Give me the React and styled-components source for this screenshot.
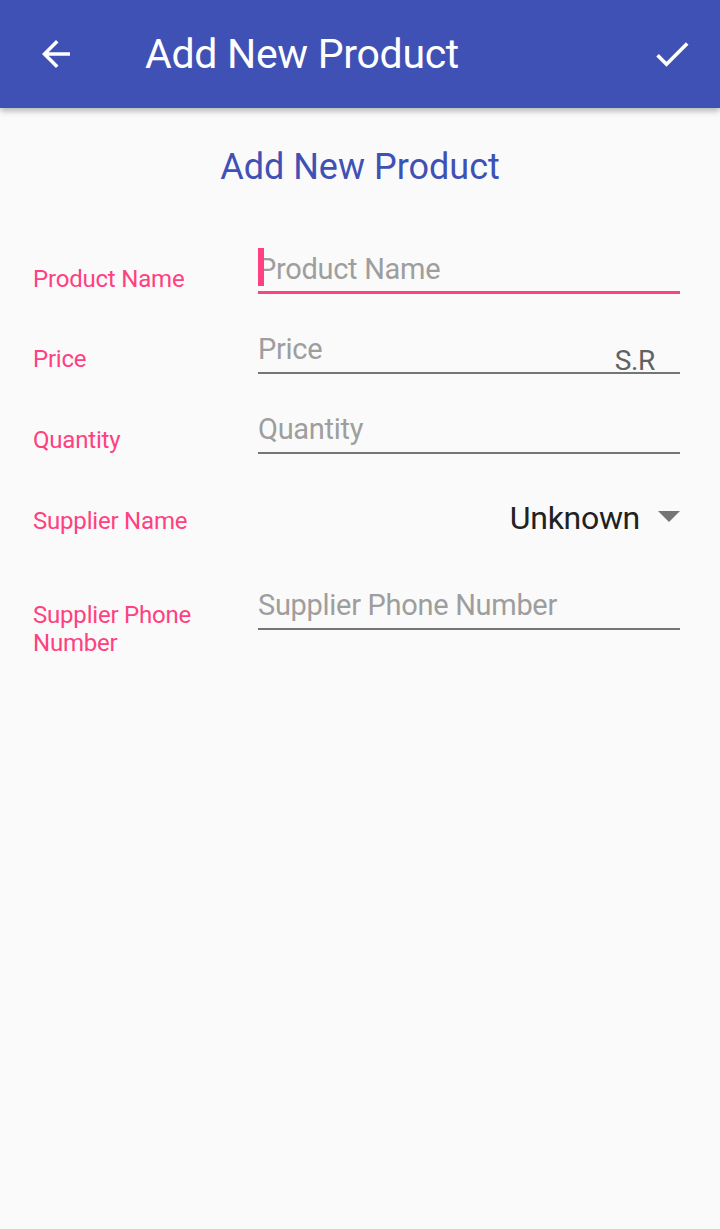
import styled, { createGlobalStyle } from "styled-components";

const GlobalStyle = createGlobalStyle`
	html, body {
		margin: 0;
		padding: 0;
		background: #fafafa;
		font-family: Roboto, "Liberation Sans", sans-serif;
	}
`;

const Screen = styled.div`
	width: 720px;
	min-height: 1229px;
	background: #fafafa;
`;

const AppBar = styled.header`
	height: 108px;
	background: #3f51b5;
	display: flex;
	align-items: center;
	padding: 0 26px 0 34px;
	box-sizing: border-box;
	box-shadow: 0 3px 6px rgba(0, 0, 0, 0.28);
	position: relative;
`;

const BarTitle = styled.h1`
	flex: 1;
	margin: 0 0 0 67px;
	color: #fff;
	font-size: 41px;
	font-weight: 400;
	letter-spacing: -0.3px;
`;

const IconButton = styled.div`
	display: flex;
	align-items: center;
	justify-content: center;
	width: 44px;
	height: 44px;
`;

const Heading = styled.h2`
	margin: 38px 0 0;
	text-align: center;
	color: #3f51b5;
	font-size: 36px;
	font-weight: 400;
`;

const Form = styled.div`
	display: flex;
	flex-direction: column;
	padding: 58px 40px 0 33px;
`;

const Row = styled.div`
	display: grid;
	grid-template-columns: 225px 1fr;
	align-items: start;
	height: ${(p) => p.$h}px;
`;

const Label = styled.div`
	color: #ff4081;
	font-size: 24px;
	line-height: 28px;
	letter-spacing: -0.2px;
	padding-top: ${(p) => p.$top}px;
`;

const Field = styled.div`
	position: relative;
	height: 48px;
	border-bottom: ${(p) => (p.$active ? "3px solid #ff4081" : "2px solid #757575")};
	box-sizing: border-box;
	display: flex;
	align-items: center;
	padding-bottom: ${(p) => (p.$active ? 0 : 1)}px;
`;

const Placeholder = styled.span`
	color: #9e9e9e;
	font-size: 29px;
	letter-spacing: -0.3px;
`;

const Cursor = styled.span`
	position: absolute;
	left: 0;
	top: 2px;
	width: 6px;
	height: 38px;
	background: #ff4081;
`;

const Suffix = styled.span`
	position: absolute;
	right: 25px;
	bottom: -5px;
	color: #616161;
	font-size: 28px;
	letter-spacing: -0.3px;
`;

const Spinner = styled.div`
	display: flex;
	justify-content: flex-end;
	align-items: center;
	gap: 18px;
	padding-top: 13px;
	color: #212121;
	font-size: 32px;
	letter-spacing: -0.3px;
`;

const Arrow = styled.span`
	width: 0;
	height: 0;
	border-left: 11px solid transparent;
	border-right: 11px solid transparent;
	border-top: 11px solid #757575;
	margin-bottom: 4px;
`;

const App = () => {
	return (
		<Screen>
			<GlobalStyle />
			<AppBar>
				<IconButton>
					<svg width="42" height="42" viewBox="0 0 24 24">
						<path d="M20 11H7.83l5.59-5.59L12 4l-8 8 8 8 1.41-1.41L7.83 13H20v-2z" fill="#fff" />
					</svg>
				</IconButton>
				<BarTitle>Add New Product</BarTitle>
				<IconButton>
					<svg width="44" height="44" viewBox="0 0 24 24">
						<path d="M9 16.17L4.83 12l-1.42 1.41L9 19 21 7l-1.41-1.41z" fill="#fff" />
					</svg>
				</IconButton>
			</AppBar>
			<Heading>Add New Product</Heading>
			<Form>
				<Row $h={80}>
					<Label $top={19}>Product Name</Label>
					<Field $active>
						<Cursor />
						<Placeholder>Product Name</Placeholder>
					</Field>
				</Row>
				<Row $h={80}>
					<Label $top={19}>Price</Label>
					<Field>
						<Placeholder>Price</Placeholder>
						<Suffix>S.R</Suffix>
					</Field>
				</Row>
				<Row $h={80}>
					<Label $top={20}>Quantity</Label>
					<Field>
						<Placeholder>Quantity</Placeholder>
					</Field>
				</Row>
				<Row $h={96}>
					<Label $top={21}>Supplier Name</Label>
					<Spinner>
						Unknown
						<Arrow />
					</Spinner>
				</Row>
				<Row $h={100}>
					<Label $top={19}>Supplier Phone Number</Label>
					<Field>
						<Placeholder>Supplier Phone Number</Placeholder>
					</Field>
				</Row>
			</Form>
		</Screen>
	);
};

export default App;
